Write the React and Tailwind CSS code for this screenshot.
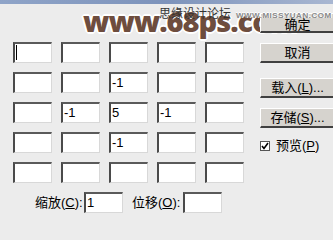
import React from 'react';

const font = { fontFamily: '"Liberation Sans", "Noto Sans CJK SC", sans-serif' };

const grid = [
  ['', '', '', '', ''],
  ['', '', '-1', '', ''],
  ['', '-1', '5', '-1', ''],
  ['', '', '-1', '', ''],
  ['', '', '', '', ''],
];

function Field({ value, cursor }) {
  return (
    <div className="relative w-[39px] h-[21px] bg-white border-t-2 border-l-2 border-t-[#5a5a5a] border-l-[#4a4a4a] border-r border-b border-r-[#d8d8d8] border-b-[#d8d8d8] text-[13px] leading-[18px] pl-[1px] text-black">
      {value}
      {cursor && <span className="absolute left-[1px] top-[1px] w-[1px] h-[15px] bg-black" />}
    </div>
  );
}

function Btn({ children, className = '' }) {
  return (
    <div className={`w-[76px] h-[20px] flex items-center justify-center bg-[#d6d3ce] border-t border-l border-t-white border-l-white border-r-2 border-b-2 border-r-[#404040] border-b-[#404040] text-[13px] leading-[14px] text-black ${className}`}>
      {children}
    </div>
  );
}

export default function App() {
  return (
    <div className="relative w-[333px] h-[240px] overflow-hidden bg-[#ececec]" style={font}>
      <div className="h-[4px] bg-gradient-to-r from-[#8fa4c8] via-[#7d93bb] to-[#a9b7d2]" />

      {/* watermark overlay */}
      <div
        className="absolute left-[83px] top-[1px] text-[29px] leading-[40px] font-black tracking-[-1px] text-[#6e4d3e] z-10"
        style={{ fontFamily: '"Open Sans", "Noto Sans", sans-serif', textShadow: '2px 0 0 #fff, -2px 0 0 #fff, 0 2px 0 #fff, 0 -2px 0 #fff, 1px 1px 0 #fff, -1px -1px 0 #fff, 1px -1px 0 #fff, -1px 1px 0 #fff' }}
      >
        www.68ps.com
      </div>
      <div className="absolute left-[159px] top-[6px] text-[12px] leading-[14px] text-[#333] z-10" style={{ fontFamily: '"Noto Sans CJK SC", sans-serif' }}>
        思缘设计论坛
      </div>

      <div className="flex">
        {/* grid of fields */}
        <div className="pl-[13px] pt-[38px] w-[260px] shrink-0">
          <div className="grid grid-cols-5 gap-x-[9px] gap-y-[9px] w-[231px]">
            {grid.map((row, r) =>
              row.map((v, c) => <Field key={r + '-' + c} value={v} cursor={r === 0 && c === 0} />)
            )}
          </div>
          <div className="flex items-center mt-[9px] pl-[22px] text-[13px] text-black">
            <span className="w-[49px]">缩放(<span className="underline">C</span>):</span>
            <Field value="1" />
            <span className="ml-[9px] w-[51px]">位移(<span className="underline">O</span>):</span>
            <Field value="" />
          </div>
        </div>

        {/* buttons */}
        <div className="relative z-20 flex flex-col pt-[9px] shrink-0">
          <Btn className="pt-[5px]">确定</Btn>
          <Btn className="mt-[10px]">取消</Btn>
          <Btn className="mt-[15px]">载入(<span className="underline">L</span>)...</Btn>
          <Btn className="mt-[10px]">存储(<span className="underline">S</span>)...</Btn>
          <div className="flex items-center mt-[8px] text-[13px] text-black">
            <div className="w-[10px] h-[10px] bg-white border border-[#555] flex items-center justify-center">
              <svg width="8" height="8" viewBox="0 0 8 8">
                <path d="M1 4 L3 6.5 L7 1" fill="none" stroke="#000" strokeWidth="1.6" />
              </svg>
            </div>
            <span className="ml-[6px]">预览(<span className="underline">P</span>)</span>
          </div>
        </div>
      </div>

      <div
        className="absolute z-30 left-[236px] top-[12px] text-[8px] leading-[8px] font-bold text-[#888] tracking-[0.5px]"
        style={{ textShadow: '1px 0 0 #fff, 0 -1px 0 #fff' }}
      >
        WWW.MISSYUAN.COM
      </div>
    </div>
  );
}
